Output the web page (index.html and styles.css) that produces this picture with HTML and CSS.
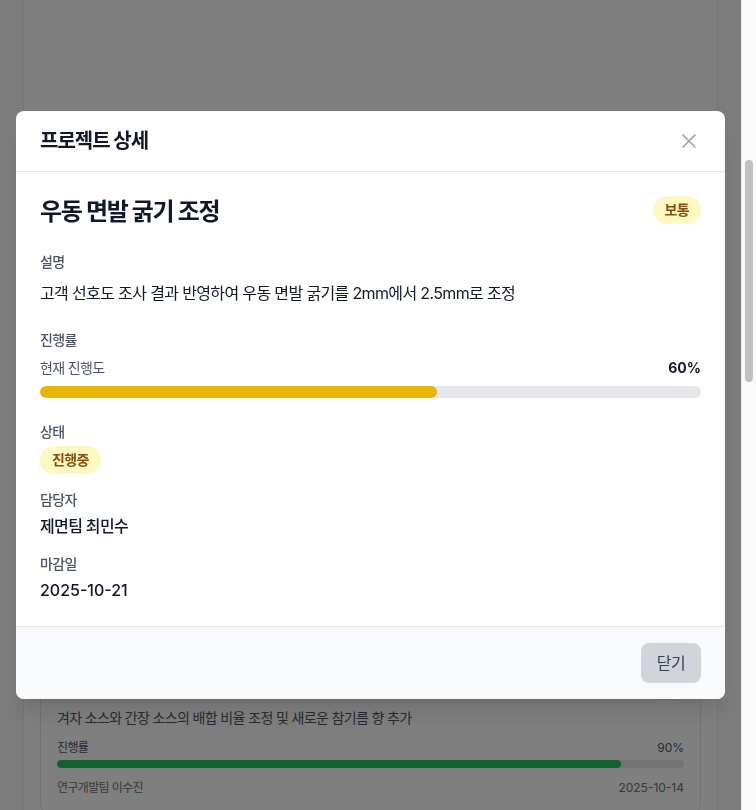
FILE: index.html
```html
<!DOCTYPE html>
<html lang="ko">
<head>
<meta charset="utf-8">
<title>프로젝트 상세</title>
<link rel="stylesheet" href="styles.css">
</head>
<body>
<div class="scroller" id="scroller">
  <div class="page">
    <main class="panel">
      <h1 class="panel-title">프로젝트 목록</h1>
      <div class="card-list">
        <article class="card">
          <div class="card-head"><h3 class="card-title">신메뉴 튀김 반죽 개선</h3><span class="chip chip-blue">진행중</span></div>
          <p class="card-desc">바삭한 식감을 유지하기 위한 튀김 반죽 배합 테스트</p>
          <div class="card-row"><span>진행률</span><span class="num">45%</span></div>
          <div class="mini-bar"><div class="mini-fill fill-blue" style="width:45%"></div></div>
          <div class="card-row card-foot"><span>연구개발팀 김하늘</span><span class="num">2025-11-02</span></div>
        </article>
        <article class="card">
          <div class="card-head"><h3 class="card-title">육수 염도 표준화</h3><span class="chip chip-yellow">보통</span></div>
          <p class="card-desc">지점별 육수 염도 편차를 줄이기 위한 계량 기준 수립</p>
          <div class="card-row"><span>진행률</span><span class="num">30%</span></div>
          <div class="mini-bar"><div class="mini-fill fill-yellow" style="width:30%"></div></div>
          <div class="card-row card-foot"><span>품질관리팀 박지훈</span><span class="num">2025-11-15</span></div>
        </article>
        <article class="card">
          <div class="card-head"><h3 class="card-title">우동 면발 굵기 조정</h3><span class="chip chip-yellow">보통</span></div>
          <p class="card-desc">고객 선호도 조사 결과 반영하여 우동 면발 굵기를 2mm에서 2.5mm로 조정</p>
          <div class="card-row"><span>진행률</span><span class="num">60%</span></div>
          <div class="mini-bar"><div class="mini-fill fill-yellow" style="width:60%"></div></div>
          <div class="card-row card-foot"><span>제면팀 최민수</span><span class="num">2025-10-21</span></div>
        </article>
        <article class="card">
          <div class="card-head"><h3 class="card-title">소스 배합 개선</h3><span class="chip chip-green">완료</span></div>
          <p class="card-desc">겨자 소스와 간장 소스의 배합 비율 조정 및 새로운 참기름 향 추가</p>
          <div class="card-row"><span>진행률</span><span class="num">90%</span></div>
          <div class="mini-bar"><div class="mini-fill fill-green" style="width:90%"></div></div>
          <div class="card-row card-foot"><span>연구개발팀 이수진</span><span class="num">2025-10-14</span></div>
        </article>
        <article class="card">
          <div class="card-head"><h3 class="card-title">포장 용기 교체</h3><span class="chip chip-blue">진행중</span></div>
          <p class="card-desc">친환경 소재 포장 용기로 전면 교체 및 단가 비교</p>
          <div class="card-row"><span>진행률</span><span class="num">20%</span></div>
          <div class="mini-bar"><div class="mini-fill fill-blue" style="width:20%"></div></div>
          <div class="card-row card-foot"><span>구매팀 정유나</span><span class="num">2025-12-01</span></div>
        </article>
        <article class="card">
          <div class="card-head"><h3 class="card-title">매장 동선 재배치</h3><span class="chip chip-yellow">보통</span></div>
          <p class="card-desc">주방과 홀 사이 동선 최적화를 통한 서빙 시간 단축</p>
          <div class="card-row"><span>진행률</span><span class="num">50%</span></div>
          <div class="mini-bar"><div class="mini-fill fill-yellow" style="width:50%"></div></div>
          <div class="card-row card-foot"><span>운영팀 한지우</span><span class="num">2025-11-20</span></div>
        </article>
        <article class="card">
          <div class="card-head"><h3 class="card-title">계절 한정 메뉴 기획</h3><span class="chip chip-blue">진행중</span></div>
          <p class="card-desc">겨울 시즌 한정 냄비우동 메뉴 구성 및 원가 산정</p>
          <div class="card-row"><span>진행률</span><span class="num">35%</span></div>
          <div class="mini-bar"><div class="mini-fill fill-blue" style="width:35%"></div></div>
          <div class="card-row card-foot"><span>메뉴기획팀 오세린</span><span class="num">2025-11-28</span></div>
        </article>
        <article class="card">
          <div class="card-head"><h3 class="card-title">직원 위생 교육</h3><span class="chip chip-green">완료</span></div>
          <p class="card-desc">전 지점 직원 대상 식품 위생 및 안전 교육 실시</p>
          <div class="card-row"><span>진행률</span><span class="num">100%</span></div>
          <div class="mini-bar"><div class="mini-fill fill-green" style="width:100%"></div></div>
          <div class="card-row card-foot"><span>인사팀 윤서연</span><span class="num">2025-10-05</span></div>
        </article>
        <article class="card">
          <div class="card-head"><h3 class="card-title">배달 포장 누수 방지</h3><span class="chip chip-yellow">보통</span></div>
          <p class="card-desc">국물 메뉴 배달 시 누수 방지를 위한 밀봉 방식 개선</p>
          <div class="card-row"><span>진행률</span><span class="num">40%</span></div>
          <div class="mini-bar"><div class="mini-fill fill-yellow" style="width:40%"></div></div>
          <div class="card-row card-foot"><span>물류팀 강도윤</span><span class="num">2025-11-10</span></div>
        </article>
        <article class="card">
          <div class="card-head"><h3 class="card-title">원재료 공급처 다변화</h3><span class="chip chip-blue">진행중</span></div>
          <p class="card-desc">밀가루 및 가쓰오부시 공급처 추가 확보와 품질 검증</p>
          <div class="card-row"><span>진행률</span><span class="num">25%</span></div>
          <div class="mini-bar"><div class="mini-fill fill-blue" style="width:25%"></div></div>
          <div class="card-row card-foot"><span>구매팀 임하준</span><span class="num">2025-12-10</span></div>
        </article>
        <article class="card">
          <div class="card-head"><h3 class="card-title">키오스크 메뉴 개편</h3><span class="chip chip-yellow">보통</span></div>
          <p class="card-desc">키오스크 메뉴 사진 교체 및 추천 메뉴 노출 순서 변경</p>
          <div class="card-row"><span>진행률</span><span class="num">55%</span></div>
          <div class="mini-bar"><div class="mini-fill fill-yellow" style="width:55%"></div></div>
          <div class="card-row card-foot"><span>마케팅팀 송예린</span><span class="num">2025-11-05</span></div>
        </article>
        <article class="card">
          <div class="card-head"><h3 class="card-title">주방 설비 점검</h3><span class="chip chip-green">완료</span></div>
          <p class="card-desc">제면기 및 튀김기 정기 점검과 노후 부품 교체</p>
          <div class="card-row"><span>진행률</span><span class="num">100%</span></div>
          <div class="mini-bar"><div class="mini-fill fill-green" style="width:100%"></div></div>
          <div class="card-row card-foot"><span>시설팀 조민재</span><span class="num">2025-09-30</span></div>
        </article>
        <article class="card">
          <div class="card-head"><h3 class="card-title">고객 리뷰 분석</h3><span class="chip chip-blue">진행중</span></div>
          <p class="card-desc">배달 앱 리뷰 키워드 분석을 통한 개선 과제 도출</p>
          <div class="card-row"><span>진행률</span><span class="num">70%</span></div>
          <div class="mini-bar"><div class="mini-fill fill-blue" style="width:70%"></div></div>
          <div class="card-row card-foot"><span>마케팅팀 배수아</span><span class="num">2025-10-30</span></div>
        </article>
      </div>
    </main>
  </div>
</div>
<div class="vscroll" aria-hidden="true"><div class="vscroll-thumb"></div></div>

<div class="overlay">
  <div class="modal" role="dialog" aria-labelledby="modal-title">
    <header class="modal-header">
      <h2 id="modal-title" class="modal-title">프로젝트 상세</h2>
      <button class="close-btn" aria-label="닫기">
        <svg width="24" height="24" viewBox="0 0 24 24" fill="none" stroke="currentColor" stroke-width="1.75" stroke-linecap="round" stroke-linejoin="round"><path d="M6 18L18 6M6 6l12 12"/></svg>
      </button>
    </header>
    <div class="modal-body">
      <div class="title-row">
        <h3 class="detail-title">우동 면발 굵기 조정</h3>
        <span class="badge">보통</span>
      </div>
      <section class="section">
        <div class="label label-lg">설명</div>
        <p class="desc">고객 선호도 조사 결과 반영하여 우동 면발 굵기를 2mm에서 2.5mm로 조정</p>
      </section>
      <section class="section">
        <div class="label label-lg">진행률</div>
        <div class="progress-row"><span>현재 진행도</span><span class="pct num">60%</span></div>
        <div class="bar"><div class="bar-fill" style="width:60%"></div></div>
      </section>
      <section class="section">
        <div class="label">상태</div>
        <div class="badge-wrap"><span class="badge">진행중</span></div>
      </section>
      <section class="section section-tight">
        <div class="label">담당자</div>
        <div class="value">제면팀 최민수</div>
      </section>
      <section class="section section-tight">
        <div class="label">마감일</div>
        <div class="value num">2025-10-21</div>
      </section>
    </div>
    <footer class="modal-footer">
      <button class="btn-close">닫기</button>
    </footer>
  </div>
</div>
<script src="script.js"></script>
</body>
</html>
```

FILE: styles.css
```css
* { box-sizing: border-box; }

html, body {
  margin: 0;
  padding: 0;
  height: 100%;
  overflow: hidden;
}

body {
  display: flex;
  background: #f6f8f6;
  font-family: Inter, "Noto Sans CJK KR", sans-serif;
  font-feature-settings: "palt";
  letter-spacing: -0.04em;
  color: #111827;
}

.num { letter-spacing: 0; }

h1, h2, h3, p { margin: 0; }

button {
  font-family: inherit;
  letter-spacing: inherit;
  border: 0;
  background: none;
  padding: 0;
  cursor: pointer;
}

/* page scroll area; its native bar is hidden and drawn by .vscroll */
.scroller {
  flex: 1;
  min-width: 0;
  height: 100%;
  overflow-y: scroll;
  scrollbar-width: none;
}

.scroller::-webkit-scrollbar { display: none; }

.vscroll {
  flex: 0 0 15px;
  height: 100%;
  background: #fafafa;
  border-left: 1px solid #ececec;
  padding: 160px 3px 0 3px;
}

.vscroll-thumb {
  height: 222px;
  border-radius: 4px;
  background: #c1c1c1;
}

.page {
  padding: 24px 23px;
}

.panel {
  background: #ffffff;
  border: 1px solid #ececec;
  border-radius: 8px;
  padding: 16px;
}

.panel-title {
  font-size: 20px;
  line-height: 28px;
  font-weight: 600;
}

.card-list {
  margin-top: 664px;
  display: flex;
  flex-direction: column;
  gap: 16px;
}

.card {
  border: 1px solid #e5e7eb;
  border-radius: 8px;
  padding: 16px;
  background: #ffffff;
}

.card-head {
  display: flex;
  justify-content: space-between;
  align-items: flex-end;
  margin-bottom: 8px;
}

.card-title {
  font-size: 16px;
  line-height: 24px;
  font-weight: 600;
}

.chip {
  font-size: 12px;
  line-height: 16px;
  padding: 4px 8px;
  border-radius: 9999px;
  font-weight: 600;
}

.chip-green { background: #dcfce7; color: #166534; }
.chip-yellow { background: #fef9c3; color: #854d0e; }
.chip-blue { background: #dbeafe; color: #1e40af; }

.card-desc {
  font-size: 14px;
  line-height: 20px;
  color: #4b5563;
}

.card-row {
  display: flex;
  justify-content: space-between;
  font-size: 12px;
  line-height: 16px;
  color: #4b5563;
  margin-top: 12px;
}

.card-foot { color: #6b7280; }

.mini-bar {
  margin-top: 4px;
  height: 8px;
  border-radius: 9999px;
  background: #e5e7eb;
  overflow: hidden;
}

.mini-fill { height: 100%; border-radius: 9999px; }
.fill-green { background: #22c55e; }
.fill-yellow { background: #eab308; }
.fill-blue { background: #3b82f6; }

/* Modal (covers the page area, not its scrollbar) */
.overlay {
  position: fixed;
  top: 0;
  left: 0;
  bottom: 0;
  right: 15px;
  background: rgba(0, 0, 0, 0.5);
  display: flex;
  align-items: center;
  justify-content: center;
  padding: 16px;
}

.modal {
  width: 100%;
  background: #ffffff;
  border-radius: 8px;
  overflow: hidden;
  box-shadow: 0 20px 25px -5px rgba(0,0,0,0.1), 0 8px 10px -6px rgba(0,0,0,0.1);
}

.modal-header {
  display: flex;
  align-items: center;
  justify-content: space-between;
  padding: 16px 24px;
  border-bottom: 1px solid #e5e7eb;
}

.modal-title {
  font-size: 20px;
  line-height: 28px;
  font-weight: 700;
  color: #111827;
  letter-spacing: -0.05em;
}

.close-btn {
  display: flex;
  color: #9ca3af;
}

.modal-body {
  padding: 24px;
}

.title-row {
  display: flex;
  justify-content: space-between;
  align-items: flex-start;
  margin-bottom: 24px;
}

.detail-title {
  font-size: 24px;
  line-height: 32px;
  font-weight: 700;
  color: #111827;
  letter-spacing: -0.055em;
}

.badge {
  display: inline-block;
  font-size: 14px;
  line-height: 20px;
  padding: 4px 12px;
  border-radius: 9999px;
  background: #fef9c3;
  color: #854d0e;
  font-weight: 600;
}

.badge-wrap { display: flex; }

.section + .section { margin-top: 24px; }
.section + .section-tight { margin-top: 16px; }

.label {
  font-size: 14px;
  line-height: 20px;
  color: #4b5563;
  font-weight: 500;
  margin-bottom: 4px;
}

.label-lg { margin-bottom: 8px; }

.desc {
  font-size: 16px;
  line-height: 26px;
  color: #111827;
}

.progress-row {
  display: flex;
  justify-content: space-between;
  font-size: 14px;
  line-height: 20px;
  color: #4b5563;
  margin-bottom: 8px;
}

.pct {
  font-weight: 700;
  color: #111827;
}

.bar {
  height: 12px;
  border-radius: 9999px;
  background: #e5e7eb;
  overflow: hidden;
}

.bar-fill {
  height: 100%;
  background: #eab308;
  border-radius: 9999px;
}

.value {
  font-size: 16px;
  line-height: 24px;
  font-weight: 500;
  color: #111827;
}

.modal-footer {
  display: flex;
  justify-content: flex-end;
  padding: 16px 24px;
  background: #f9fafb;
  border-top: 1px solid #e5e7eb;
}

.btn-close {
  font-size: 16px;
  line-height: 24px;
  padding: 8px 16px;
  border-radius: 8px;
  background: #d1d5db;
  color: #374151;
}
```

FILE: script.js
```js
document.getElementById('scroller').scrollTop = 584;
```
